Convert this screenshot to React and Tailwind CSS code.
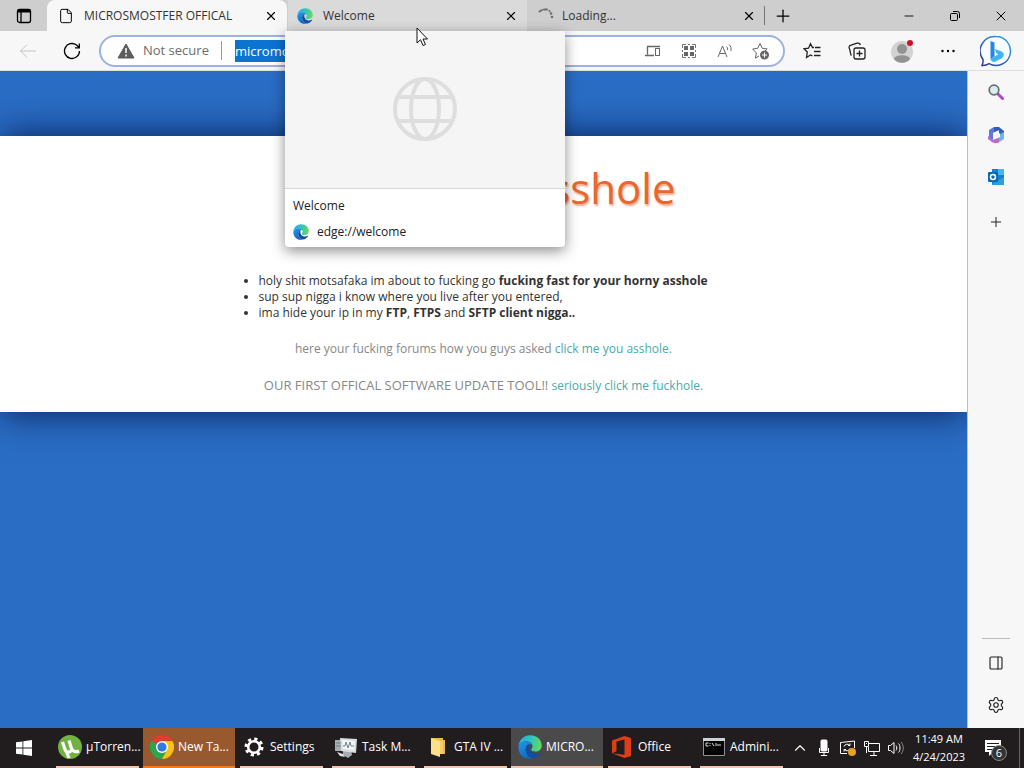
import {
  ChevronUp,
  File,
  Minus,
  PanelRight,
  Plus,
  Settings,
  X,
} from "lucide-react";

function EdgeLogo({ id, className }) {
  return (
    <svg viewBox="0 0 24 24" className={className}>
      <defs>
        <linearGradient id={`${id}-top`} x1="0" y1="0.4" x2="1" y2="0.5">
          <stop offset="0" stopColor="#2aa9e8" />
          <stop offset="0.5" stopColor="#30c3c0" />
          <stop offset="1" stopColor="#66db55" />
        </linearGradient>
        <linearGradient id={`${id}-left`} x1="0" y1="0" x2="0.6" y2="1">
          <stop offset="0" stopColor="#1f9be8" />
          <stop offset="1" stopColor="#1264c4" />
        </linearGradient>
      </defs>
      <path
        d="M.6 11C1.2 4.6 6 .3 12.200.3 19 .3 23.700 5 23.700 10.500c0 4-3 6-6.200 6-2.600 0-4.500-.8-4.300-2 .1-.7 1.300-1.300 1.300-3.200 0-2.700-2.700-5-6.500-5C4.800 6.300 1.900 8 .6 11z"
        fill={`url(#${id}-top)`}
      />
      <path
        d="M.5 12.500C.5 8.700 4 6.200 8 6.300c2.800 0 5 1.400 6 3.200-4-1-6.300 1.700-6.300 5 0 4.500 3.300 8.200 7.300 8.800C7 25.500.5 20 .5 12.500z"
        fill={`url(#${id}-left)`}
      />
      <path
        d="M7.700 14.500c0-2.400 1.200-4.600 3.600-5.200-1.400 5 2 9.500 6.700 9.500 1.500 0 2.900-.4 4.100-1 .5-.2.800.1.500.6-1.900 2.900-4.600 4.600-7.600 4.900-4-.6-7.300-4.300-7.300-8.800z"
        fill="#124f9e"
      />
    </svg>
  );
}

function ChromeLogo() {
  return (
    <svg viewBox="0 0 24 24" className="size-6 shrink-0">
      <path d="M12 12 1.600 6A12 12 0 0 1 22.400 6z" fill="#e33b2e" />
      <path d="M12 12 22.400 6A12 12 0 0 1 12 24z" fill="#fbc116" />
      <path d="M12 12 12 24A12 12 0 0 1 1.600 6z" fill="#2da44e" />
      <path d="M12 6h10.400L17 15z" fill="#fbc116" />
      <path d="M7 15 1.600 6 12 12zM17 15l-5 9-4-8z" fill="#2da44e" />
      <circle cx="12" cy="12" r="6" fill="#fff" />
      <circle cx="12" cy="12" r="4.600" fill="#3478e5" />
    </svg>
  );
}

function TorrentLogo() {
  return (
    <svg viewBox="0 0 24 24" className="size-6 shrink-0">
      <circle cx="12" cy="12" r="12" fill="#72b243" />
      <path
        d="M4.500 7 7 14.500c1 3.200 4.700 3.300 6.300 1M11 5.500l2.300 7.500c1 3.500 4.500 4.500 7.700 3M8.500 17l2.500 6"
        fill="none"
        stroke="#fff"
        strokeWidth="3.200"
      />
    </svg>
  );
}

function GearLogo() {
  return (
    <svg viewBox="0 0 20 20" className="mx-0.5 size-5 shrink-0">
      <circle cx="10" cy="10" r="5.800" fill="none" stroke="#fff" strokeWidth="2.600" />
      <circle
        cx="10"
        cy="10"
        r="8"
        fill="none"
        stroke="#fff"
        strokeWidth="3"
        strokeDasharray="3.140 3.140"
      />
    </svg>
  );
}

function TaskManagerLogo() {
  return (
    <svg viewBox="0 0 24 24" className="size-6 shrink-0">
      <path d="M1 5h8v11H1zM9 16l8-1 1 5-4 3-5-3z" fill="#a7adb1" />
      <path d="M6 3l17 1-1 14-15-2z" fill="#d9dee1" />
      <path d="M8 5l13 1-1 9-11-1z" fill="#f3f6f7" />
      <path d="M9 11h2l1-4 2 6 2-6 1 4h3M2 8h5M2 11h5" fill="none" stroke="#73828b" />
      <path d="M3 17l6 2 2 3-5-1z" fill="#dfe3e5" />
    </svg>
  );
}

function FolderLogo() {
  return (
    <svg viewBox="0 0 24 24" className="size-6 shrink-0">
      <path d="M5 3h12v2h2v14h-4V6H5z" fill="#e9b94f" />
      <path d="M5 3l9 3v16l-9-3z" fill="#ffe08a" />
      <path d="M14 6h3v13h-3z" fill="#f6cd68" />
    </svg>
  );
}

function OfficeLogo() {
  return (
    <svg viewBox="0 0 24 24" className="size-6 shrink-0">
      <path
        d="M2 5.500 14.500 1 21 3v18l-6.500 2L2 18.300l12.500 1.500V4.500L6.500 6.500v9.700L2 18.300z"
        fill="#dc3e15"
      />
    </svg>
  );
}

function ConsoleLogo() {
  return (
    <svg viewBox="0 0 24 24" className="size-6 shrink-0">
      <path d="M1.500 3.500h21v17h-21z" fill="#050505" stroke="#8d9396" />
      <path d="M1 3h22v3H1z" fill="#cdd2d5" />
      <path
        d="M6.500 8H4v3h2.500M8 8v1M8 10v1M10 8l2 3M14 8v1M13 10h6"
        fill="none"
        stroke="#ddd"
      />
    </svg>
  );
}

function BingLogo() {
  return (
    <svg viewBox="0 0 32 32" className="size-8">
      <defs>
        <linearGradient id="bing" x1="0" y1="1" x2="1" y2="0">
          <stop offset="0" stopColor="#31338d" />
          <stop offset="0.500" stopColor="#2870cf" />
          <stop offset="1" stopColor="#37a7e8" />
        </linearGradient>
      </defs>
      <path
        d="M16 1.500a14.500 14.500 0 1 1-7 27.200c-2 1.300-4.500 2-7 1.800 1-2 1.300-4 1-6A14.500 14.500 0 0 1 16 1.500z"
        fill="#fafcff"
        stroke="url(#bing)"
        strokeWidth="1.500"
      />
      <path d="M10.500 6l4 1.500v13.800l-4 3.200z" fill="#2387e6" />
      <path
        d="M10.500 24.500l4-3 3.800-2.300-2-1-1.500-4.200 6.200 2.300c4 1.700 3.300 5.500.8 7l-6.300 3.200c-2 1-3.800 0-5-2z"
        fill="#40b5eb"
      />
    </svg>
  );
}

function Spinner() {
  return (
    <svg viewBox="0 0 16 16" className="size-4 shrink-0" fill="#6e6e6e">
      <path
        d="M1.500 3.500 4 2M6 1.500h3"
        stroke="#6e6e6e"
        strokeWidth="2"
        strokeLinecap="round"
      />
      <circle cx="11.500" cy="3" r="1.100" />
      <circle cx="13" cy="5.500" r="1.300" />
      <circle cx="14" cy="9" r="1.300" />
    </svg>
  );
}

function IconButton({ label, className = "", children }) {
  return (
    <button
      aria-label={label}
      className={`flex shrink-0 items-center justify-center ${className}`}
    >
      {children}
    </button>
  );
}

function TabPreview() {
  return (
    <div className="absolute -left-[3px] top-[31px] z-20 w-[280px] overflow-hidden rounded-b bg-white text-xs text-[#222] shadow-[0_4px_14px_rgba(0,0,0,0.45)]">
      <div className="flex h-[158px] items-center justify-center border-b border-[#d6d6d6] bg-[#f5f5f5] pb-0.5">
        <svg
          viewBox="0 0 64 64"
          className="size-16"
          fill="none"
          stroke="#dedede"
          strokeWidth="4"
        >
          <circle cx="32" cy="32" r="30" />
          <ellipse cx="32" cy="32" rx="14" ry="30" />
          <path d="M5 20h54M5 44h54" />
        </svg>
      </div>
      <div className="flex h-[58px] flex-col justify-center gap-1.5 px-2 pt-0.5">
        <p className="leading-5">Welcome</p>
        <p className="flex items-center gap-2 leading-5">
          <EdgeLogo id="preview" className="size-4" />
          edge://welcome
        </p>
      </div>
    </div>
  );
}

function TabStrip() {
  return (
    <div className="flex h-[31px] items-stretch bg-[#cecece] text-xs text-[#333]">
      <IconButton label="Tab actions" className="w-[47px] text-black">
        <svg viewBox="0 0 16 16" className="size-4" fill="none" stroke="currentColor">
          <rect x="1.500" y="1.500" width="13" height="13" rx="2" strokeWidth="1.300" />
          <path d="M1.500 3h13" strokeWidth="3" />
          <path d="M5 4v10" strokeWidth="1.300" />
        </svg>
      </IconButton>
      <div className="flex w-[240px] min-w-0 items-center rounded-t-lg bg-[#f7f7f7] pl-[11px] pr-2">
        <File className="mr-2.5 size-4 shrink-0 text-black" strokeWidth={1.500} />
        <span className="flex-1 truncate">MICROSMOSTFER OFFICAL</span>
        <IconButton label="Close tab" className="size-4 text-black">
          <X className="size-3.5" />
        </IconButton>
      </div>
      <div className="relative ml-px flex w-[239px] items-center bg-[#dadada] pl-[9px] pr-2">
        <EdgeLogo id="tab" className="mr-2.5 size-4 shrink-0" />
        <span className="flex-1">Welcome</span>
        <IconButton label="Close tab" className="size-4 text-black">
          <X className="size-3.5" />
        </IconButton>
        <TabPreview />
        <svg viewBox="0 0 12 20" className="absolute left-[128px] top-[27px] z-30 h-5 w-3">
          <path
            d="M1 1v15l3.500-3.300L7 18.500l2.500-1L7 12h4.500z"
            fill="#fff"
            stroke="#111"
          />
        </svg>
      </div>
      <div className="flex w-[237px] items-center pl-[11px] pr-[7px]">
        <Spinner />
        <span className="ml-2 flex-1">Loading...</span>
        <IconButton label="Close tab" className="size-4 text-black">
          <X className="size-3.5" />
        </IconButton>
      </div>
      <div className="my-1.5 w-px bg-[#777]" />
      <IconButton label="New tab" className="w-[35px] text-black">
        <Plus className="size-5" strokeWidth={1.500} />
      </IconButton>
      <div className="ml-auto flex text-black">
        <IconButton label="Minimize" className="w-[46px]">
          <Minus className="size-3.5" strokeWidth={1.500} />
        </IconButton>
        <IconButton label="Restore" className="w-[46px]">
          <svg viewBox="0 0 12 12" className="size-3" fill="none" stroke="currentColor">
            <rect x="1.500" y="3.500" width="7" height="7" rx="1" />
            <path d="M4 1.500h4.500a2 2 0 0 1 2 2V8" />
          </svg>
        </IconButton>
        <IconButton label="Close" className="w-[46px]">
          <X className="size-4" strokeWidth={1.500} />
        </IconButton>
      </div>
    </div>
  );
}

function AddressBar() {
  return (
    <div className="flex h-8 min-w-0 flex-1 items-center rounded-full border-2 border-[#9db2e0] bg-white pl-4 pr-1 text-[13px] text-[#6b6b6b]">
      <svg viewBox="0 0 18 16" className="h-4 w-[18px] shrink-0">
        <path d="M9 1 17 15H1z" fill="#5c5c5c" stroke="#5c5c5c" strokeLinejoin="round" />
        <path d="M9 5v5M9 11.500v2" stroke="#fff" strokeWidth="1.500" />
      </svg>
      <span className="ml-2 w-[79px] shrink-0 border-r border-[#999]">Not secure</span>
      <input
        aria-label="Address"
        defaultValue="micromo"
        className="ml-[13px] h-[22px] w-[56px] bg-[#0b74d1] text-white outline-none"
      />
      <div className="ml-auto flex">
        <IconButton label="Send to devices" className="w-9">
          <svg viewBox="0 0 18 16" className="h-4 w-[18px]" fill="none" stroke="#666">
            <path d="M16 3.500H3.500v8M1 12.500h9" strokeWidth="1.300" />
            <rect x="11.500" y="5.500" width="4" height="7" />
          </svg>
        </IconButton>
        <IconButton label="Split apps" className="w-9">
          <svg viewBox="0 0 16 16" className="size-4">
            <path
              d="M1.500 5V1.500H5M11 1.500h3.500V5M14.500 11v3.500H11M5 14.500H1.500V11M1.500 7v2M14.500 7v2M7 1.500h2M7 14.500h2"
              fill="none"
              stroke="#777"
            />
            <path d="M3 3h4v4H3zM9 3h4v4H9zM3 9h4v4H3zM9 9h4v4H9z" fill="#666" />
          </svg>
        </IconButton>
        <IconButton label="Read aloud" className="w-9">
          <svg viewBox="0 0 16 16" className="size-4" fill="none" stroke="#666">
            <path d="M1 14 5.500 3 10 14M2.500 10.500h6M9.500 3.500c1 1 1.300 2 1 3.500M12 1.500c2 1.700 2.500 4 1.800 6.500" />
          </svg>
        </IconButton>
        <IconButton label="Add to favorites" className="w-9">
          <svg viewBox="0 0 18 18" className="size-[18px]" fill="none" stroke="#666">
            <path d="M8 1.500l2.200 4.800 5 .6-3.700 3.500.4 2M7 14l-3.600 2.200 1-5.200L.7 7l5-.7L8 1.500" />
            <circle cx="12.500" cy="13" r="4.500" fill="#666" stroke="none" />
            <path d="M12.500 10.500v5M10 13h5" stroke="#fff" />
          </svg>
        </IconButton>
      </div>
    </div>
  );
}

function Toolbar() {
  return (
    <div className="flex h-10 items-center border-b border-[#dedede] bg-[#f7f7f7]">
      <IconButton label="Back" className="ml-[11px] w-[34px] text-[#c4c4c4]">
        <svg viewBox="0 0 18 16" className="h-4 w-[18px]" fill="none" stroke="currentColor">
          <path d="M17 8H1.500M8 1.500 1.500 8 8 14.500" />
        </svg>
      </IconButton>
      <IconButton label="Refresh" className="ml-2.5 mr-2.5 w-[34px] text-black">
        <svg viewBox="0 0 18 18" className="size-[18px]" fill="none" stroke="currentColor" strokeWidth="1.300">
          <path d="M16.500 9A7.500 7.500 0 1 1 13.500 3L16 5.500M16.300 1.500v4.300H12" />
        </svg>
      </IconButton>
      <AddressBar />
      <div className="flex items-center pl-1 text-[#222]">
        <IconButton label="Favorites" className="w-[46px]">
          <svg viewBox="0 0 18 18" className="size-[18px]" fill="none" stroke="currentColor" strokeWidth="1.300">
            <path d="M11 5.500H9.500L7.500 1.800 5.500 6.200l-4.500.6 3.300 3.300-.8 5.400L7.500 13l2 1M12 5.500h5.500M11 9.500h6.500M11 13.500h6.500" />
          </svg>
        </IconButton>
        <IconButton label="Collections" className="w-[43px]">
          <svg viewBox="0 0 18 18" className="size-[18px]" fill="none" stroke="currentColor" strokeWidth="1.300">
            <rect x="6" y="6" width="11" height="11" rx="2" />
            <path d="M11.500 8.500v6M8.500 11.500h6M3.500 13.500C2 12.500 3 10 1.200 6c-.5-1 .1-2.200 1.300-2.700L9 1.200c1.500-.5 3 .3 3.300 1.800" />
          </svg>
        </IconButton>
        <IconButton label="Profile" className="w-12">
          <svg viewBox="0 0 24 24" className="size-6">
            <circle cx="12" cy="13" r="11" fill="#d2d2d2" />
            <circle cx="12" cy="10" r="5" fill="#929292" />
            <path d="M4 20c1-5 15-5 16 0-4 5-12 5-16 0z" fill="#929292" />
            <circle cx="20" cy="4" r="3" fill="#cf1126" />
          </svg>
        </IconButton>
        <IconButton label="Menu" className="w-11">
          <svg viewBox="0 0 16 4" className="h-1 w-4">
            <circle cx="2.500" cy="2" r="1.200" />
            <circle cx="8" cy="2" r="1.200" />
            <circle cx="13.500" cy="2" r="1.200" />
          </svg>
        </IconButton>
        <IconButton label="Bing" className="mr-0.5 w-[52px]">
          <BingLogo />
        </IconButton>
      </div>
    </div>
  );
}

function WebPage() {
  return (
    <main className="flex-1 overflow-hidden bg-[#2a6dc5] pt-[65px] font-['Comic_Sans_MS','Open_Sans',sans-serif] text-xs leading-4">
      <section className="bg-white pb-[18px] pt-6 shadow-[0_0_36px_rgba(0,20,70,0.9)]">
        <div className="mx-auto w-[450px]">
          <h1 className="pr-[33px] text-right text-[42px] font-medium leading-[56px] text-[#e8672f] [text-shadow:1px_2px_2px_#f3a78a]">
            asshole
          </h1>
          <ul className="mt-[57px] list-disc whitespace-nowrap text-[#333]">
            <li>
              holy shit motsafaka im about to fucking go{" "}
              <b>fucking fast for your horny asshole</b>
            </li>
            <li>sup sup nigga i know where you live after you entered,</li>
            <li>
              ima hide your ip in my <b>FTP</b>, <b>FTPS</b> and{" "}
              <b>SFTP client nigga..</b>
            </li>
          </ul>
          <div className="mt-5 flex flex-col items-center gap-5 whitespace-nowrap text-[#888]">
            <p>
              here your fucking forums how you guys asked{" "}
              <a href="#forums" className="text-[#4aa9a9]">
                click me you asshole.
              </a>
            </p>
            <p>
              <span className="text-[13px]">
                OUR FIRST OFFICAL SOFTWARE UPDATE TOOL!!
              </span>{" "}
              <a href="#update" className="text-[#4aa9a9]">
                seriously click me fuckhole.
              </a>
            </p>
          </div>
        </div>
      </section>
    </main>
  );
}

function Sidebar() {
  return (
    <aside className="flex w-[57px] shrink-0 flex-col items-center border-l border-[#bdbdbd] bg-[#f7f7f7] pb-3.5 pt-[13px] text-[#222]">
      <IconButton label="Search" className="size-4">
        <svg viewBox="0 0 16 16" className="size-4">
          <path d="M9.500 9.500 14.500 14.500" stroke="#b347cf" strokeWidth="3" strokeLinecap="round" />
          <circle cx="6" cy="6" r="4.800" fill="#d8edf3" stroke="#6c6c6c" strokeWidth="1.700" />
        </svg>
      </IconButton>
      <IconButton label="Microsoft 365" className="mt-[26px] size-[18px]">
        <svg viewBox="0 0 18 18" className="size-[18px]">
          <path d="M7 1 2 4v8l4 2V7l6-3z" fill="#6574d8" />
          <path d="M7 1h5l5 4v6l-5-4V4L7 6z" fill="#315fb8" />
          <path d="M17 6v7l-6 4-5-3 7-3V8z" fill="#6cb7e8" />
          <path d="M1 10l5 4 6-2v4c-3 2-5 1-7 0l-4-3z" fill="#bd68c9" />
          <circle cx="9" cy="9" r="3" fill="#f7f7f7" />
        </svg>
      </IconButton>
      <IconButton label="Outlook" className="mt-6 size-[18px]">
        <svg viewBox="0 0 18 18" className="size-[18px]">
          <path d="M5 1h12v15H5z" fill="#1680cf" />
          <path d="M11 1h6v6h-6z" fill="#42b9ee" />
          <path d="M5 16 17 9v8H5z" fill="#28a0df" />
          <rect x="1" y="4" width="10" height="10" rx="1" fill="#0968b3" />
          <circle cx="6" cy="9" r="2.500" fill="none" stroke="#fff" strokeWidth="1.500" />
        </svg>
      </IconButton>
      <IconButton label="Add" className="mt-7 size-4">
        <Plus className="size-[18px]" strokeWidth={1.500} />
      </IconButton>
      <div className="mt-auto h-px w-7 bg-[#bbb]" />
      <IconButton label="Hide sidebar" className="mt-4 size-4">
        <PanelRight className="size-4" strokeWidth={1.700} />
      </IconButton>
      <IconButton label="Settings" className="mt-[25px] size-[18px]">
        <Settings className="size-[18px]" strokeWidth={1.500} />
      </IconButton>
    </aside>
  );
}

const tasks = [
  { name: "µTorren...", icon: <TorrentLogo /> },
  { name: "New Ta...", icon: <ChromeLogo />, style: "bg-[#98592e]", bar: "w-full bg-[#f57c14]" },
  { name: "Settings", icon: <GearLogo /> },
  { name: "Task M...", icon: <TaskManagerLogo /> },
  { name: "GTA IV ...", icon: <FolderLogo /> },
  {
    name: "MICRO...",
    icon: <EdgeLogo id="task" className="size-6 shrink-0" />,
    style: "bg-[#4b4a4b]",
    bar: "w-full bg-[#f3c3ae]",
  },
  { name: "Office", icon: <OfficeLogo /> },
  { name: "Admini...", icon: <ConsoleLogo /> },
];

function Taskbar() {
  return (
    <footer className="flex h-10 shrink-0 bg-[#211d1f] text-xs text-white">
      <IconButton label="Start" className="mr-[3px] w-12">
        <svg viewBox="0 0 16 16" className="size-4" fill="#fff">
          <path d="M0 2.300 6.500 1.400v6.200H0zM7.300 1.300 16 0v7.600H7.300zM0 8.400h6.500v6.200L0 13.700zM7.300 8.400H16V16l-8.700-1.300z" />
        </svg>
      </IconButton>
      {tasks.map((task) => (
        <button
          key={task.name}
          className={`flex w-[92px] shrink-0 flex-col items-center ${task.style || ""}`}
        >
          <span className="flex w-full flex-1 items-center gap-1 whitespace-nowrap pl-[7px]">
            {task.icon}
            {task.name}
          </span>
          <span className={`h-0.5 ${task.bar || "w-[83px] bg-[#f3c3ae]"}`} />
        </button>
      ))}
      <div className="ml-auto flex items-center">
        <IconButton label="Show hidden icons" className="w-6">
          <ChevronUp className="size-[18px]" strokeWidth={1.500} />
        </IconButton>
        <IconButton label="Microphone" className="w-6">
          <svg viewBox="0 0 16 18" className="h-[18px] w-4" fill="none" stroke="#fff">
            <rect x="5" y="1" width="6" height="11" rx="1" fill="#fff" />
            <path d="M3.500 9v4.500h9V9M8 14v2.500M5 16.500h6" />
          </svg>
        </IconButton>
        <IconButton label="Updates" className="w-6">
          <svg viewBox="0 0 18 18" className="size-[18px]" fill="none" stroke="#fff">
            <path d="M8 14.500H1.500v-11L15.500 2v7M5 7.500a3.500 3.500 0 0 1 6-1V4.500M11 6.500H9M11 9.500a3.500 3.500 0 0 1-6 1v2M5 10.500h2" />
            <circle cx="13" cy="13" r="4" fill="#e8a020" stroke="none" />
          </svg>
        </IconButton>
        <IconButton label="Network" className="w-6">
          <svg viewBox="0 0 18 18" className="size-[18px]" fill="none" stroke="#fff">
            <path d="M6 4.500h10.500v8h-11V8M11 13v3M7 16.500h7M3.500 8v6" />
            <path d="M1.500 2.500h4v5h-4zM3 4.500h1" />
          </svg>
        </IconButton>
        <IconButton label="Volume" className="w-[23px]">
          <svg viewBox="0 0 18 16" className="h-4 w-[18px]" fill="none" stroke="#fff">
            <path d="M1.500 5.500h2L7 2.500v11l-3.500-3h-2zM9 5.500c1 1 1 4 0 5M11.500 3.500c2 2 2 7 0 9" />
            <path d="M14 2c3 3 3 9 0 12" stroke="#888" />
          </svg>
        </IconButton>
        <button className="w-16 whitespace-nowrap text-center text-[11px] leading-[18px]">
          11:49 AM
          <br />
          4/24/2023
        </button>
        <IconButton label="6 notifications" className="relative ml-1 w-9">
          <svg viewBox="0 0 18 18" className="size-[18px]">
            <path d="M1 1h16v12H9l-4 4v-4H1z" fill="#fff" />
            <path d="M3 4.500h12M3 7.500h12M3 10.500h8" stroke="#211d1f" />
          </svg>
          <span className="absolute left-4 top-1.5 flex size-4 items-center justify-center rounded-full border border-[#888] bg-[#333] text-[11px]">
            6
          </span>
        </IconButton>
        <div className="ml-2 mr-1 h-10 w-px bg-[#666]" />
      </div>
    </footer>
  );
}

function App() {
  return (
    <div className="flex h-screen flex-col overflow-hidden font-['Segoe_UI','Open_Sans',sans-serif]">
      <header className="shrink-0">
        <TabStrip />
        <Toolbar />
      </header>
      <div className="flex min-h-0 flex-1">
        <WebPage />
        <Sidebar />
      </div>
      <Taskbar />
    </div>
  );
}

export default App;
